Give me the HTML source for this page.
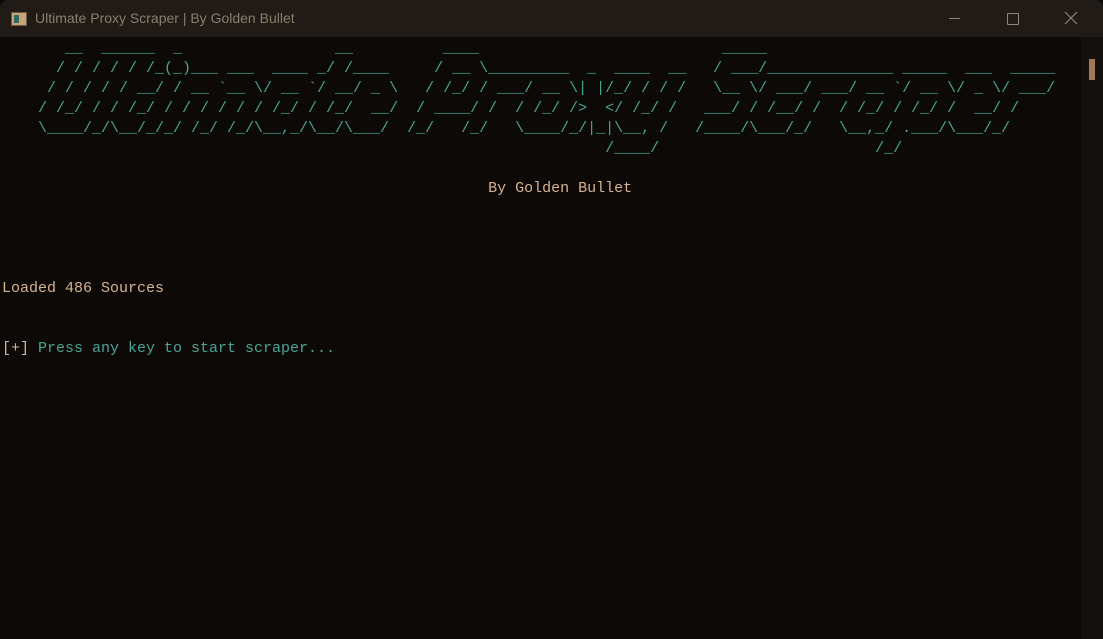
<!DOCTYPE html>
<html><head><meta charset="utf-8"><style>
html,body{margin:0;padding:0;width:1103px;height:639px;overflow:hidden;background:#0c0907;}
#title{position:absolute;left:0;top:0;width:1103px;height:37px;background:#201b16;border-radius:8px 8px 0 0;}
#title .t{position:absolute;left:35px;top:10px;font:14px "Liberation Sans",sans-serif;color:#8a7e6d;}
#title .ic{position:absolute;left:11px;top:12px;width:14px;height:12px;background:#c9a27a;border:1px solid #6b5a45;}
#title .ic:after{content:"";position:absolute;left:2px;top:2px;width:5px;height:8px;background:#2e6b62;}
.min{position:absolute;left:949px;top:18px;width:11px;height:1px;background:#8f8372;}
.max{position:absolute;left:1007px;top:13px;width:10px;height:10px;border:1px solid #8f8372;border-radius:1px;}
.cls{position:absolute;left:1064px;top:11px;}
#sb{position:absolute;left:1081px;top:37px;width:22px;height:602px;background:#13100d;}
#thumb{position:absolute;left:1089px;top:59px;width:6px;height:21px;background:#a27856;}
pre{position:absolute;left:2px;top:39px;margin:0;font:15px/20px "Liberation Mono",monospace;color:#d8b48e;}
.g{color:#4aa595;}
</style></head><body>
<div id="title"><div class="ic"></div><div class="t">Ultimate Proxy Scraper | By Golden Bullet</div>
<div class="min"></div><div class="max"></div>
<svg class="cls" width="14" height="14" viewBox="0 0 14 14"><path d="M1 1L13 13M13 1L1 13" stroke="#8f8372" stroke-width="1.2"/></svg></div>
<div id="sb"></div><div id="thumb"></div>
<pre><span class="g">       __  ______  _                 __          ____                           _____
      / / / / / /_(_)___ ___  ____ _/ /____     / __ \_________  _  ____  __   / ___/______________ _____  ___  _____
     / / / / / __/ / __ `__ \/ __ `/ __/ _ \   / /_/ / ___/ __ \| |/_/ / / /   \__ \/ ___/ ___/ __ `/ __ \/ _ \/ ___/
    / /_/ / / /_/ / / / / / / /_/ / /_/  __/  / ____/ /  / /_/ />  &lt;/ /_/ /   ___/ / /__/ /  / /_/ / /_/ /  __/ /
    \____/_/\__/_/_/ /_/ /_/\__,_/\__/\___/  /_/   /_/   \____/_/|_|\__, /   /____/\___/_/   \__,_/ .___/\___/_/
                                                                   /____/                        /_/</span>

                                                      By Golden Bullet




Loaded 486 Sources


[+] <span class="g">Press any key to start scraper...</span></pre>
</body></html>
